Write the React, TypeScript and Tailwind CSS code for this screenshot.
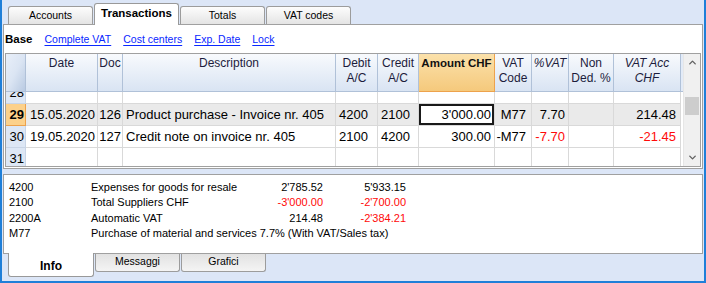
import { ChevronUp, ChevronDown } from 'lucide-react';

const columns = [
  { key: 'n', w: 'w-[20px]', head: [] as string[] },
  { key: 'date', head: ['Date'] },
  { key: 'doc', head: ['Doc'] },
  { key: 'desc', head: ['Description'] },
  { key: 'debit', head: ['Debit', 'A/C'] },
  { key: 'credit', head: ['Credit', 'A/C'] },
  { key: 'amount', head: ['Amount CHF'] },
  { key: 'vat', head: ['VAT', 'Code'] },
  { key: 'pvat', head: ['%VAT'] },
  { key: 'nonded', head: ['Non', 'Ded. %'] },
  { key: 'vatacc', head: ['VAT Acc', 'CHF'] },
];

const rows = [
  { n: '28' },
  {
    n: '29',
    selected: true,
    date: '15.05.2020',
    doc: '126',
    desc: 'Product purchase - Invoice nr. 405',
    debit: '4200',
    credit: '2100',
    amount: "3'000.00",
    vat: 'M77',
    pvat: '7.70',
    vatacc: '214.48',
  },
  {
    n: '30',
    red: true,
    date: '19.05.2020',
    doc: '127',
    desc: 'Credit note on invoice nr. 405',
    debit: '2100',
    credit: '4200',
    amount: '300.00',
    vat: '-M77',
    pvat: '-7.70',
    vatacc: '-21.45',
  },
  { n: '31' },
];

const info = [
  { code: '4200', desc: 'Expenses for goods for resale', a: "2'785.52", b: "5'933.15" },
  { code: '2100', desc: 'Total Suppliers CHF', a: "-3'000.00", b: "-2'700.00", red: true },
  { code: '2200A', desc: 'Automatic VAT', a: '214.48', b: "-2'384.21", redB: true },
  { code: 'M77', desc: 'Purchase of material and services 7.7% (With VAT/Sales tax)' },
];

const gridCols =
  'grid grid-cols-[20px_72px_25px_213px_42px_41px_76px_37px_37px_45px_67px_2px]';

function TopTab({ label, active }: { label: string; active?: boolean }) {
  if (active) {
    return (
      <div className="relative z-10 -mb-px flex h-[22px] w-[85px] items-center justify-center rounded-t-[3px] border border-b-0 border-[#999] bg-white pb-[2px] text-[11.5px] font-bold text-black">
        {label}
      </div>
    );
  }
  return (
    <div className="flex h-[18px] w-[85px] items-center justify-center rounded-t-[3px] border border-b-0 border-[#9c9c9c] bg-linear-to-b from-[#fdfdfd] to-[#e4e4e4] pt-px text-[10.5px] text-black">
      {label}
    </div>
  );
}

function BottomTab({ label, active }: { label: string; active?: boolean }) {
  if (active) {
    return (
      <div className="relative z-10 -mt-px flex h-[24px] w-[86px] items-center justify-center rounded-b-[3px] border border-t-0 border-[#999] bg-white pt-[3px] text-[12px] font-bold text-black">
        {label}
      </div>
    );
  }
  return (
    <div className="flex h-[18px] w-[85px] items-center justify-center rounded-b-[3px] border border-t-0 border-[#9c9c9c] bg-linear-to-b from-[#e2e2e2] to-[#f4f4f4] pb-px text-[10.5px] text-black">
      {label}
    </div>
  );
}

export default function App() {
  return (
    <div className="flex h-[283px] w-[706px] flex-col overflow-hidden border-x-2 border-b-2 border-[#1f7fd8] bg-[#dce6f7] font-['Liberation_Sans',Arial,sans-serif]">
      {/* top tabs */}
      <div className="flex h-[24px] items-end gap-px pl-[6px]">
        <TopTab label="Accounts" />
        <TopTab label="Transactions" active />
        <TopTab label="Totals" />
        <TopTab label="VAT codes" />
      </div>

      {/* transactions panel */}
      <div className="mx-px h-[145px] border border-[#a0a0a0] bg-white">
        <div className="flex h-[28px] items-center gap-[12px] pl-px pt-[2px] text-[10.5px]">
          <span className="text-[11.5px] font-bold text-black">Base</span>
          {['Complete VAT', 'Cost centers', 'Exp. Date', 'Lock'].map((l) => (
            <span key={l} className="text-[#0a28ff] underline underline-offset-[2px]">
              {l}
            </span>
          ))}
        </div>

        <div className="mx-px flex h-[114px] border border-[#a0a0a0]">
          <div className="flex w-[677px] flex-col">
            {/* header */}
            <div className={`${gridCols} h-[38px]`}>
              {columns.map((c) => {
                if (c.key === 'n') {
                  return (
                    <div
                      key={c.key}
                      className="border-r border-b border-[#b0c1d8] bg-linear-to-br from-[#e9eff9] via-[#dbe5f3] to-[#b9cae2]"
                    />
                  );
                }
                const amount = c.key === 'amount';
                const italic = c.key === 'pvat' || c.key === 'vatacc';
                return (
                  <div
                    key={c.key}
                    className={`flex flex-col items-center border-r border-b pt-[2px] leading-[15px] whitespace-nowrap ${
                      amount
                        ? 'border-[#eda24c] bg-linear-to-b from-[#fbe1aa] to-[#f5c97c] text-[11.5px] font-bold text-[#111]'
                        : 'border-[#b0c1d8] bg-linear-to-b from-[#f8fafd] to-[#d9e4f3] text-[12px] text-[#1c1c3c]'
                    } ${italic ? 'italic' : ''}`}
                  >
                    {c.head.map((h) => (
                      <span key={h}>{h}</span>
                    ))}
                  </div>
                );
              })}
              <div className="border-b border-[#b0c1d8] bg-[#e3ebf7]" />
            </div>

            {/* body */}
            <div className="flex-1 overflow-hidden">
              <div className="-mt-[10px]">
                {rows.map((r) => {
                  const sel = !!r.selected;
                  const txt = r.red ? 'text-[#ff0a0a]' : 'text-black';
                  const cell = `flex h-[22px] items-center border-r border-b border-[#d9d9d9] whitespace-nowrap ${
                    sel ? 'bg-[#eaeaea]' : 'bg-white'
                  }`;
                  return (
                    <div key={r.n} className={`${gridCols} text-[13px] text-black`}>
                      <div
                        className={`flex h-[22px] items-center justify-end border-r border-b pr-px ${
                          sel
                            ? 'border-[#eda24c] bg-[#fcd18b] font-bold'
                            : 'border-[#c9d5e6] bg-[#dde7f5]'
                        }`}
                      >
                        {r.n}
                      </div>
                      <div className={`${cell} pl-[4px]`}>{r.date}</div>
                      <div className={`${cell} justify-end pr-px`}>{r.doc}</div>
                      <div className={`${cell} pl-[3px]`}>{r.desc}</div>
                      <div className={`${cell} pl-[3px]`}>{r.debit}</div>
                      <div className={`${cell} pl-[3px]`}>{r.credit}</div>
                      <div
                        className={`${cell} justify-end pr-[3px] ${
                          sel ? 'bg-white ring-2 ring-[#1a1a1a] ring-inset' : ''
                        }`}
                      >
                        {r.amount}
                      </div>
                      <div className={`${cell} justify-end pr-[5px]`}>{r.vat}</div>
                      <div className={`${cell} justify-end pr-[3px] ${txt}`}>{r.pvat}</div>
                      <div className={cell} />
                      <div className={`${cell} justify-end pr-[4px] ${txt}`}>{r.vatacc}</div>
                      <div className="h-[22px] bg-white" />
                    </div>
                  );
                })}
              </div>
            </div>
          </div>

          {/* scrollbar */}
          <div className="flex w-[17px] flex-col border-l border-[#e6e6e6] bg-[#f0f0f0]">
            <div className="flex h-[17px] items-center justify-center">
              <ChevronUp size={11} strokeWidth={3} className="text-[#606060]" />
            </div>
            <div className="h-[26px]" />
            <div className="mx-px h-[18px] bg-[#cdcdcd]" />
            <div className="flex-1" />
            <div className="flex h-[17px] items-center justify-center">
              <ChevronDown size={11} strokeWidth={3} className="text-[#606060]" />
            </div>
          </div>
        </div>
      </div>

      <div className="h-[5px]" />

      {/* info panel */}
      <div className="mx-px h-[80px] border border-[#a0a0a0] bg-white pt-[5px] pl-[5px] text-[11px] leading-[15.3px] text-black">
        {info.map((i) => (
          <div key={i.code} className="flex whitespace-nowrap">
            <span className="w-[82px]">{i.code}</span>
            {i.a === undefined ? (
              <span>{i.desc}</span>
            ) : (
              <>
                <span className="w-[160px]">{i.desc}</span>
                <span className={`w-[72px] text-right ${i.red ? 'text-[#ff0a0a]' : ''}`}>{i.a}</span>
                <span
                  className={`w-[83px] text-right ${i.red || i.redB ? 'text-[#ff0a0a]' : ''}`}
                >
                  {i.b}
                </span>
              </>
            )}
          </div>
        ))}
      </div>

      {/* bottom tabs */}
      <div className="flex items-start gap-px pl-[6px]">
        <BottomTab label="Info" active />
        <BottomTab label="Messaggi" />
        <BottomTab label="Grafici" />
      </div>
    </div>
  );
}
